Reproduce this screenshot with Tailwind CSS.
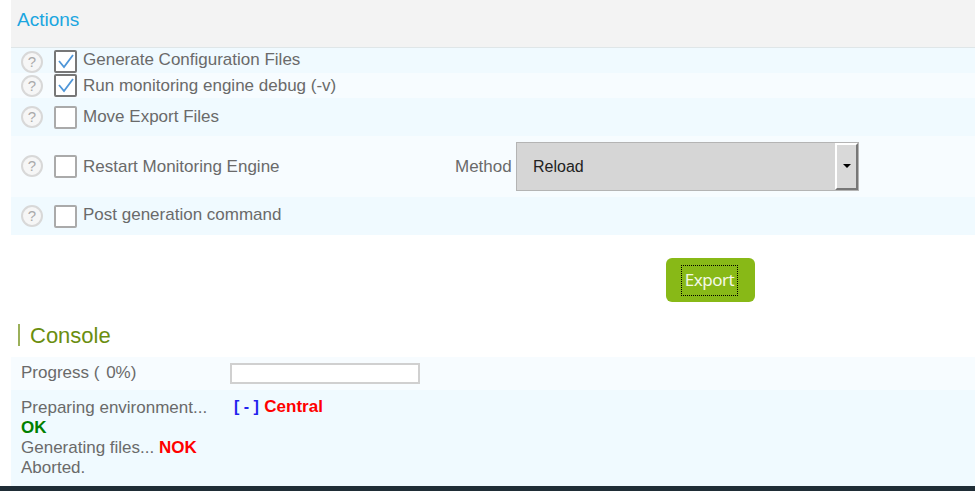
<!DOCTYPE html>
<html lang="en">
<head>
    <meta charset="UTF-8">
    <script src="https://cdn.jsdelivr.net/npm/@tailwindcss/browser@4"></script>
    <title>Export</title>
</head>
<body class="w-[975px] h-[491px] overflow-hidden bg-white font-['Liberation_Sans',sans-serif] text-[17px] text-[#6a6a6a]">
    <div class="pl-[11px] h-[486px] flex flex-col">
        <div class="h-[48px] bg-[#f3f3f3] border-b border-[#dfe6e8] pl-[6px] pt-[9px] text-[19px] leading-[22px] text-[#1ba6e0]">Actions</div>

        <div class="h-[25px] bg-[#f0faff] flex items-center pl-[10px]">
            <span class="w-[22px] h-[22px] mt-[3px] rounded-full border-2 border-[#d8d8d8] bg-[#f6f6f6] text-[#aaa] text-[15px] leading-[18px] text-center">?</span>
            <span class="ml-[11px] mt-[1px] w-[23px] h-[23px] border-2 border-[#777] rounded-[2px] bg-white flex items-center justify-center">
                <svg width="17" height="15" viewBox="0 0 17 15" fill="none" stroke="#4f96d8" stroke-width="1.8"><path d="M2 7l5 6L16 1"/></svg>
            </span>
            <span class="ml-[6px] -mt-[1px]">Generate Configuration Files</span>
        </div>
        <div class="h-[25px] bg-[#f7fcff] flex items-center pl-[10px]">
            <span class="w-[22px] h-[22px] mt-[1px] rounded-full border-2 border-[#d8d8d8] bg-[#f6f6f6] text-[#aaa] text-[15px] leading-[18px] text-center">?</span>
            <span class="ml-[11px] w-[23px] h-[23px] border-2 border-[#777] rounded-[2px] bg-white flex items-center justify-center">
                <svg width="17" height="15" viewBox="0 0 17 15" fill="none" stroke="#4f96d8" stroke-width="1.8"><path d="M2 7l5 6L16 1"/></svg>
            </span>
            <span class="ml-[6px]">Run monitoring engine debug (-v)</span>
        </div>
        <div class="h-[38px] bg-[#f0faff] flex items-center pl-[10px]">
            <span class="w-[22px] h-[22px] rounded-full border-2 border-[#d8d8d8] bg-[#f6f6f6] text-[#aaa] text-[15px] leading-[18px] text-center">?</span>
            <span class="ml-[11px] w-[23px] h-[23px] border-2 border-[#aaa] rounded-[2px] bg-white"></span>
            <span class="ml-[6px] -mt-[1px]">Move Export Files</span>
        </div>
        <div class="h-[61px] bg-[#f7fcff] flex items-center pl-[10px]">
            <span class="w-[22px] h-[22px] -mt-[2px] rounded-full border-2 border-[#d8d8d8] bg-[#f6f6f6] text-[#aaa] text-[15px] leading-[18px] text-center">?</span>
            <span class="ml-[11px] w-[23px] h-[23px] border-2 border-[#aaa] rounded-[2px] bg-white"></span>
            <span class="ml-[6px] w-[372px]">Restart Monitoring Engine</span>
            <span class="w-[61px]">Method</span>
            <div class="relative w-[343px] h-[49px] -mt-[1px] bg-[#d6d6d6] border border-[#b4b4b4] pl-[16px] pt-[13px] text-[#222] text-[16px] leading-[22px]">
                Reload
                <span class="absolute right-0 top-0 w-[23px] h-[47px] bg-[#d9d9d9] border-t-2 border-l-2 border-white border-r-2 border-b-2 [border-right-color:#777] [border-bottom-color:#777] flex items-center justify-center">
                    <span class="w-0 h-0 border-x-[4px] border-x-transparent border-t-[4px] border-t-black"></span>
                </span>
            </div>
        </div>
        <div class="h-[38px] bg-[#f0faff] flex items-center pl-[10px]">
            <span class="w-[22px] h-[22px] rounded-full border-2 border-[#d8d8d8] bg-[#f6f6f6] text-[#aaa] text-[15px] leading-[18px] text-center">?</span>
            <span class="ml-[11px] w-[23px] h-[23px] border-2 border-[#aaa] rounded-[2px] bg-white"></span>
            <span class="ml-[6px] -mt-[3px]">Post generation command</span>
        </div>

        <div class="h-[122px] relative">
            <button class="absolute left-[655px] top-[23px] w-[89px] h-[44px] bg-[#88b917] rounded-[6px] p-[6px_15px]">
                <span class="block w-[57px] h-[31px] border border-dotted border-black text-[#f4f8e6] text-[17px] leading-[27px] font-['Noto_Sans',sans-serif] tracking-[-0.5px]">Export</span>
            </button>
            <div class="absolute left-[7px] top-[88px] h-[24px] flex items-center text-[22px] text-[#6b8e0f]">
                <span class="w-[2px] h-[22px] bg-[#9bb05a] mr-[10px]"></span>Console
            </div>
        </div>

        <div class="h-[33px] bg-[#f7fcff] flex items-center pl-[10px]">
            <span class="w-[209px] -mt-[2px]">Progress ( <span class="ml-[2px]">0%)</span></span>
            <span class="w-[190px] h-[21px] border-2 border-[#d0d0d0] bg-white"></span>
        </div>
        <div class="h-[96px] bg-[#f0faff] pl-[10px] pt-[8px] flex leading-[20px]">
            <div class="w-[213px]">
                <div>Preparing environment...</div>
                <div class="font-bold text-[#008000]">OK</div>
                <div>Generating files... <b class="text-[#ff0000]">NOK</b></div>
                <div>Aborted.</div>
            </div>
            <div class="text-[16px] -mt-[1px]"><span class="font-bold text-[#2222ee]">[ - ]</span> <b class="ml-[1px] text-[17px] text-[#ff0000]">Central</b></div>
        </div>
    </div>
    <div class="h-[5px] bg-[#1f2d36]"></div>
</body>
</html>
